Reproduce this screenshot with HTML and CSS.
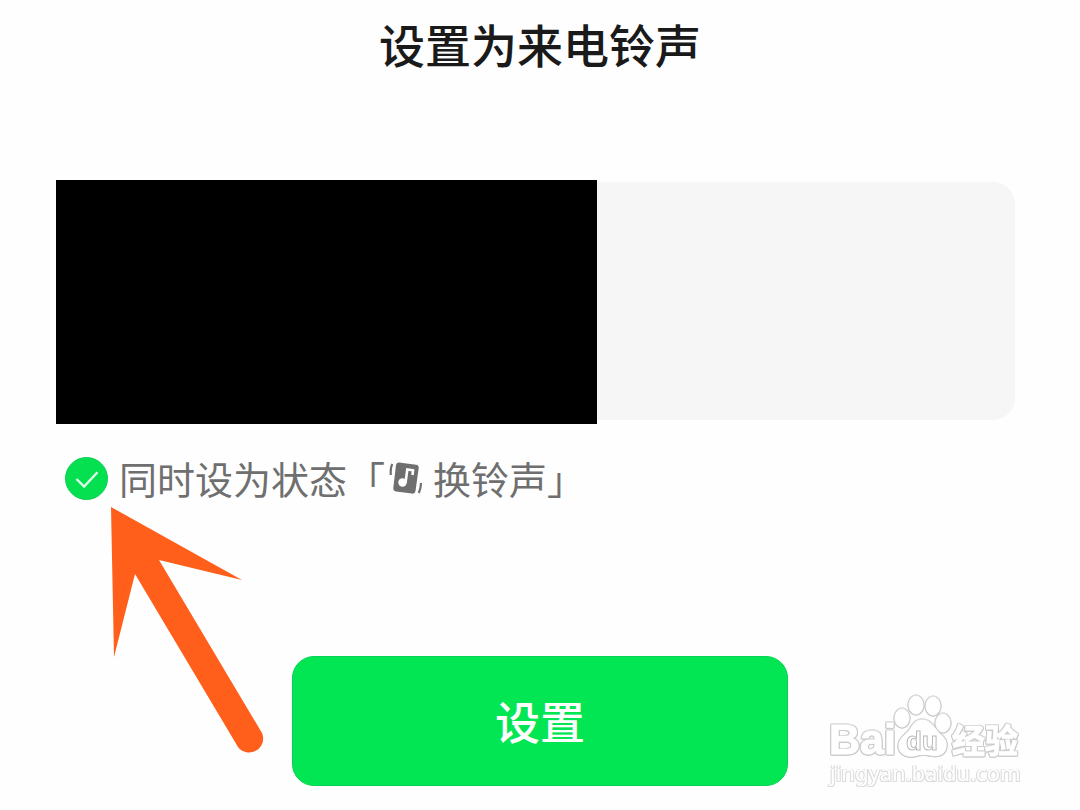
FILE: index.html
```
<!DOCTYPE html>
<html lang="zh-CN">
<head>
    <meta charset="UTF-8">
    <meta name="viewport" content="width=device-width, initial-scale=1.0">
    <title>设置为来电铃声</title>
    <link rel="stylesheet" href="styles.css">
</head>
<body>
    <main class="page">
        <h1>设置为来电铃声</h1>
        <div class="card">
            <div class="mask"></div>
        </div>
        <div class="option">
            <input type="checkbox" id="syncStatus" class="check" checked>
            <label for="syncStatus" class="option-label">
                <span>同时设为状态「</span>
                <svg class="ring-icon" viewBox="0 0 36 36" aria-hidden="true">
                    <path d="M11 2.500 L28 4.800 Q31 5.200 30.700 8 L27.500 31 Q27 34 24 33.600 L8 31.400 Q5 31 5.300 28 L8 5 Q8.300 2.200 11 2.500Z" fill="#6f6f6f"/>
                    <path d="M17.500 23 L19.300 9.500 L25 10.300 L24.500 15" fill="none" stroke="#fff" stroke-width="2.600"/>
                    <circle cx="14.500" cy="22.500" r="4.200" fill="#fff"/>
                    <path d="M4.300 4 Q2.300 8 2.800 15 M33 23 Q33 28 30.800 33" fill="none" stroke="#6f6f6f" stroke-width="2.200"/>
                </svg>
                <span>换铃声」</span>
            </label>
            <svg class="arrow" viewBox="0 0 156 248" aria-hidden="true">
                <path d="M1 1 L132 74 L49 54 L152 227 A14 14 0 0 1 128 241 L25 68 L4 151Z" fill="#ff5f1a"/>
            </svg>
        </div>
        <button type="button" class="submit">设置</button>
    </main>
    <svg class="watermark" viewBox="0 0 200 100" role="img" aria-label="Baidu 经验 jingyan.baidu.com">
        <g class="logo">
            <text x="4" y="60" class="brand">Bai</text>
            <ellipse cx="77" cy="24" rx="7" ry="9"/>
            <ellipse cx="91" cy="11" rx="7" ry="9"/>
            <ellipse cx="108" cy="12" rx="7" ry="9"/>
            <ellipse cx="118" cy="29" rx="7" ry="9"/>
            <path d="M97 26 C105 26 108 32 113 38 C118 43 122 46 121 53 C120 61 112 63 105 61 C99 60 95 60 89 62 C80 63 74 59 74 52 C74 45 79 42 84 37 C88 31 90 26 97 26Z"/>
            <text x="81" y="56" class="paw-text">du</text>
            <text x="127" y="59" class="brand-cn">经验</text>
        </g>
        <g class="logo logo-thin">
            <text x="5" y="87" class="site">jingyan.baidu.com</text>
        </g>
    </svg>
    <script>
        var check = document.getElementById('syncStatus');
        check.addEventListener('change', function() {
            check.setAttribute('aria-checked', check.checked);
        });
    </script>
</body>
</html>
```
FILE: styles.css
```
* {
    box-sizing: border-box;
}
body {
    margin: 0;
    min-height: 100vh;
    position: relative;
    background-color: #fefefe;
    font-family: "Noto Sans CJK SC", sans-serif;
}
.page {
    display: flex;
    flex-direction: column;
    padding: 13px 0 24px;
}
h1 {
    margin: 0 0 109px;
    font-size: 46px;
    font-weight: 500;
    line-height: 60px;
    color: #1a1a1a;
    text-align: center;
}
.card {
    position: relative;
    height: 238px;
    margin: 0 65px 0 56px;
    background-color: #f6f6f6;
    border-radius: 22px;
}
/* hides the contact details on the card */
.mask {
    position: absolute;
    top: -2px;
    bottom: -4px;
    left: 0;
    width: 56.4%;
    background-color: #000;
}
.option {
    position: relative;
    display: flex;
    align-items: center;
    gap: 11px;
    margin: 30px 65px 0 56px;
    padding-left: 9px;
}
.check {
    appearance: none;
    width: 43px;
    height: 43px;
    margin: 0;
    border: 1px solid #08cf50;
    border-radius: 50%;
    background: #05e051 url("data:image/svg+xml,%3Csvg xmlns='http://www.w3.org/2000/svg' viewBox='0 0 43 43'%3E%3Cpath d='M11 22l8 8 14-15' fill='none' stroke='%23dfffe8' stroke-width='2.500'/%3E%3C/svg%3E") center / cover;
}
.check:not(:checked) {
    background: #fff;
    border-color: #bbb;
}
.option-label {
    display: flex;
    align-items: center;
    font-size: 38px;
    line-height: 56px;
    color: #6f6f6f;
    white-space: nowrap;
}
.ring-icon {
    width: 36px;
    height: 36px;
    margin: 0 9px 0 3px;
}
.arrow {
    position: absolute;
    top: 56px;
    left: 54px;
    width: 156px;
    height: 248px;
    pointer-events: none;
}
.submit {
    align-self: center;
    width: 46%;
    height: 130px;
    margin-top: 150px;
    padding: 0 0 2px;
    border: 1px solid #08d253;
    border-radius: 22px;
    background-color: #02e653;
    color: #fff;
    font-family: inherit;
    font-size: 45px;
    font-weight: 500;
}
.watermark {
    position: absolute;
    right: 55px;
    bottom: 16px;
    width: 200px;
    height: 100px;
}
.logo {
    fill: #fff;
    stroke: #fff;
    stroke-width: 1px;
    filter: drop-shadow(1px 0 0 #ccc) drop-shadow(-1px 0 0 #ccc) drop-shadow(0 1px 0 #ccc) drop-shadow(0 -1px 0 #ddd);
}
.logo-thin {
    stroke: none;
    filter: drop-shadow(1px 0 0 #ddd) drop-shadow(-1px 0 0 #ddd) drop-shadow(0 1px 0 #ddd);
}
.brand {
    font: bold 43px "Liberation Sans", sans-serif;
}
.brand-cn {
    font: bold 33px "Noto Sans CJK SC", sans-serif;
}
.paw-text {
    font: bold 26px "Liberation Sans", sans-serif;
    stroke: #bbb;
}
.site {
    font: 22px "Noto Sans", sans-serif;
}
```
